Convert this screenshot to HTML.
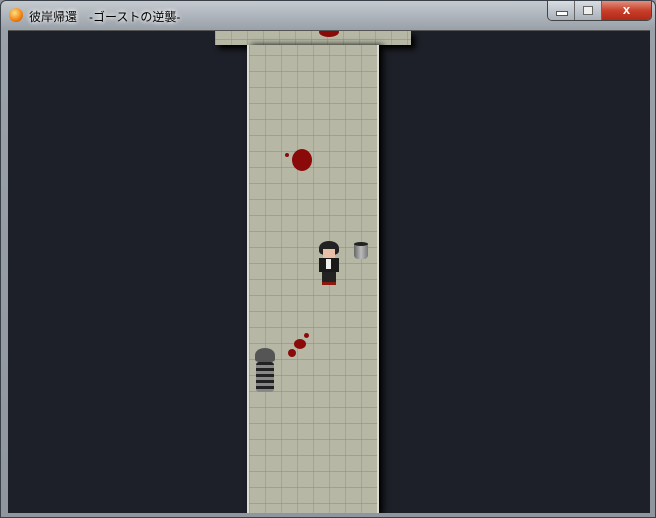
<!DOCTYPE html>
<html><head><meta charset="utf-8"><style>
html,body{margin:0;padding:0;width:656px;height:518px;overflow:hidden;background:#8d949c}
.frame{position:absolute;left:0;top:0;width:654px;height:516px;border:1px solid #3a4048;border-radius:6px 6px 0 0;background:linear-gradient(#c4cad0 0,#9aa1a9 28px,#8f969e 100%)}
.title{position:absolute;left:28px;top:7px;font:12px "Liberation Sans","Noto Sans CJK JP",sans-serif;color:#000;text-shadow:0 0 5px #fff,0 0 5px #fff}
.orb{position:absolute;left:8px;top:7px;width:14px;height:14px;border-radius:50%;background:radial-gradient(circle at 40% 35%,#ffe080,#f08010 60%,#b04000)}
.btns{position:absolute;left:546px;top:0;width:103px;height:19px;border:1px solid #444;border-top:none;border-radius:0 0 5px 5px;overflow:hidden;display:flex}
.b{flex:0 0 26px;background:linear-gradient(#d8dde2,#a9b0b8);border-right:1px solid #666;position:relative}
.x{flex:1;background:linear-gradient(#e09080,#c8402a 50%,#b02818)}
.client{position:absolute;left:7px;top:29px;width:642px;height:482px;background:#1d2028;overflow:hidden;border-top:1px solid #555}
.floor{position:absolute;box-sizing:border-box;background-color:#b6b8a5;background-image:linear-gradient(90deg,rgba(140,142,125,.45) 1px,transparent 1px),linear-gradient(rgba(140,142,125,.55) 1px,transparent 1px);background-size:16px 16px}
.blood{position:absolute;background:#8a0a0a;border-radius:50%}
</style></head><body>
<div class="frame">
<div class="orb"></div>
<div class="title">彼岸帰還　-ゴーストの逆襲-</div>
<div class="btns"><div class="b"><div style="position:absolute;left:8px;top:10px;width:10px;height:3px;background:#fff;border:1px solid #555"></div></div><div class="b"><div style="position:absolute;left:8px;top:5px;width:8px;height:7px;border:1px solid #666;background:#eee"></div></div><div class="x"><div style="color:#fff;font:bold 13px 'Liberation Sans',sans-serif;text-align:center;line-height:18px">x</div></div></div>
<div class="client">
<div class="floor" style="left:207px;top:0;width:196px;height:14px;background-position:0 -8px;box-shadow:4px 4px 6px #000"></div>
<div class="floor" style="left:239px;top:14px;width:132px;height:470px;background-position:0 -6px;border-left:2px solid #dcdcd2;border-right:2px solid #dcdcd2;box-shadow:4px 0 6px #000"></div>
<div class="blood" style="left:311px;top:-4px;width:20px;height:10px"></div>
<div class="blood" style="left:284px;top:118px;width:20px;height:22px"></div>
<div class="blood" style="left:277px;top:122px;width:4px;height:4px"></div>
<div class="blood" style="left:286px;top:308px;width:12px;height:10px"></div>
<div class="blood" style="left:280px;top:318px;width:8px;height:8px"></div>
<div class="blood" style="left:296px;top:302px;width:5px;height:5px"></div>
<div style="position:absolute;left:311px;top:210px;width:20px;height:14px;background:#222;border-radius:50% 50% 30% 30%"></div>
<div style="position:absolute;left:315px;top:218px;width:12px;height:9px;background:#e8c0a8"></div>
<div style="position:absolute;left:311px;top:227px;width:20px;height:14px;background:#1a1a1a"></div>
<div style="position:absolute;left:318px;top:228px;width:5px;height:10px;background:#eee"></div>
<div style="position:absolute;left:314px;top:241px;width:14px;height:13px;background:#222"></div>
<div style="position:absolute;left:314px;top:251px;width:14px;height:3px;background:#8a1a10"></div>
<div style="position:absolute;left:346px;top:212px;width:14px;height:16px;background:linear-gradient(90deg,#666,#bbb,#777);border-radius:2px 2px 4px 4px"></div>
<div style="position:absolute;left:346px;top:211px;width:14px;height:4px;background:#222;border-radius:50%"></div>
<div style="position:absolute;left:247px;top:317px;width:20px;height:14px;background:#555;border-radius:50% 50% 20% 20%"></div>
<div style="position:absolute;left:248px;top:331px;width:18px;height:30px;background:repeating-linear-gradient(#222 0 3px,#888 3px 6px);border-radius:3px"></div>
</div>
</div>
</body></html>
